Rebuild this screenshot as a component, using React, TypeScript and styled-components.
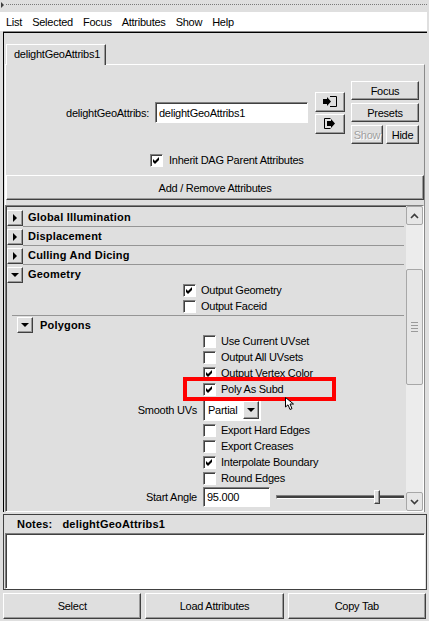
import React from "react";
import styled, { createGlobalStyle, css } from "styled-components";

const BG = "#dfdfdf";

const GlobalStyle = createGlobalStyle`
  * { box-sizing: border-box; }
  body { margin: 0; background: ${BG}; }
`;

// classic raised / sunken bevels
const raised = css`
  background: ${BG};
  border: 1px solid;
  border-color: #ffffff #404040 #404040 #ffffff;
  box-shadow: inset -1px -1px 0 #9a9a9a;
`;

const sunken = css`
  background: #ffffff;
  border: 1px solid;
  border-color: #808080 #ffffff #ffffff #808080;
  box-shadow: inset 1px 1px 0 #404040;
`;

const Page = styled.div`
  position: relative;
  width: 429px;
  height: 621px;
  overflow: hidden;
  display: flex;
  flex-direction: column;
  background: ${BG};
  font-family: "Liberation Sans", Arial, sans-serif;
  font-size: 11px;
  letter-spacing: -0.25px;
  color: #000;
`;

const Grip = styled.div`
  flex: none;
  height: 12px;
  display: flex;
  align-items: center;
  gap: 2px;
  padding: 0 2px 3px 1px;
`;

const GripArrow = styled.span`
  width: 0;
  height: 0;
  border-top: 3px solid transparent;
  border-bottom: 3px solid transparent;
  border-left: 3px solid #404040;
`;

const GripDots = styled.span`
  flex: 1;
  border-top: 1px dotted #7a7a7a;
`;

const MenuBar = styled.div`
  flex: none;
  height: 19px;
  margin-right: 2px;
  background: #ffffff;
  display: flex;
  align-items: center;
  gap: 10px;
  padding-left: 6px;
`;

const MainFrame = styled.div`
  flex: none;
  margin: 1px 2px 0 3px;
  border-top: 1px solid #000;
  border-left: 1px solid #000;
  box-shadow: 0 -1px 0 #8a8a8a;
  padding: 11px 0 0 1px;
`;

const TabStrip = styled.div`
  display: flex;
  height: 20px;
`;

const Tab = styled.div`
  position: relative;
  z-index: 1;
  margin-left: 1px;
  width: 100px;
  height: 21px;
  padding-left: 7px;
  line-height: 19px;
  background: ${BG};
  border-top: 1px solid #fff;
  border-left: 1px solid #fff;
  border-right: 1px solid #404040;
  box-shadow: inset -1px 0 0 #9a9a9a;
`;

const TabPanel = styled.div`
  margin-right: 2px;
  border-top: 1px solid #fff;
  border-left: 1px solid #fff;
  border-right: 1px solid #8a8a8a;
`;

const EditorRow = styled.div`
  display: flex;
  align-items: center;
  padding-top: 16px;
`;

const NameLabel = styled.div`
  width: 143px;
  text-align: right;
  margin-right: 6px;
`;

const TextField = styled.div<{ $w: number; $h: number }>`
  ${sunken};
  width: ${(p) => p.$w}px;
  height: ${(p) => p.$h}px;
  flex: none;
  display: flex;
  align-items: center;
  padding-left: 3px;
  white-space: nowrap;
  overflow: hidden;
`;

const IconCol = styled.div`
  display: flex;
  flex-direction: column;
  gap: 2px;
  width: 30px;
  margin-left: 7px;
`;

const IconBtn = styled.div`
  ${raised};
  height: 20px;
  display: flex;
  align-items: center;
  justify-content: center;
`;

const ButtonCol = styled.div`
  display: flex;
  flex-direction: column;
  gap: 3px;
  width: 68px;
  margin-left: 6px;
`;

const ButtonPair = styled.div`
  display: flex;
  gap: 3px;
`;

const PushButton = styled.button<{ $h?: number; $w?: number; $grow?: boolean; $disabled?: boolean }>`
  ${raised};
  appearance: none;
  margin: 0;
  padding: 0;
  font: inherit;
  letter-spacing: inherit;
  flex: none;
  height: ${(p) => p.$h ?? 19}px;
  width: ${(p) => (p.$w ? `${p.$w}px` : "auto")};
  ${(p) => (p.$grow ? "flex: 1 1 0;" : "")}
  display: flex;
  align-items: center;
  justify-content: center;
  color: ${(p) => (p.$disabled ? "#a0a0a0" : "#000")};
  text-shadow: ${(p) => (p.$disabled ? "1px 1px 0 #fff" : "none")};
`;

const WideButton = styled(PushButton)`
  width: 100%;
`;

const InheritRow = styled.div`
  display: flex;
  align-items: center;
  gap: 6px;
  height: 14px;
  margin: 9px 0 8px;
  padding-left: 144px;
`;

const Box = styled.div`
  ${sunken};
  width: 13px;
  height: 13px;
  flex: none;
  display: flex;
  align-items: center;
  justify-content: center;
`;

const ScrollArea = styled.div`
  display: flex;
  height: 307px;
  margin: 5px 0 0 -1px;
  border: 1px solid;
  border-color: #808080 #ffffff #ffffff #808080;
  box-shadow: inset 1px 1px 0 #404040;
`;

const Content = styled.div`
  flex: 1;
  overflow: hidden;
  display: flex;
  flex-direction: column;
  padding: 2px 0 0 1px;
`;

const FrameHeader = styled.div<{ $indent?: number; $h?: number }>`
  flex: none;
  display: flex;
  align-items: center;
  height: ${(p) => p.$h ?? 19}px;
  padding-left: ${(p) => p.$indent ?? 0}px;
`;

const CollapseBtn = styled.div`
  ${raised};
  width: 16px;
  height: 16px;
  flex: none;
  display: flex;
  align-items: center;
  justify-content: center;
`;

const Arrow = styled.span<{ $open?: boolean }>`
  width: 0;
  height: 0;
  ${(p) =>
    p.$open
      ? css`
          border-left: 4px solid transparent;
          border-right: 4px solid transparent;
          border-top: 4px solid #000;
        `
      : css`
          border-top: 4px solid transparent;
          border-bottom: 4px solid transparent;
          border-left: 4px solid #000;
        `}
`;

const FrameTitle = styled.div<{ $line?: boolean; $pad?: number }>`
  flex: 1;
  align-self: stretch;
  display: flex;
  align-items: center;
  margin-right: 2px;
  padding-left: ${(p) => p.$pad ?? 5}px;
  font-weight: bold;
  letter-spacing: 0.2px;
  border-bottom: ${(p) => (p.$line ? "1px solid #959595" : "1px solid transparent")};
`;

const CheckRow = styled.div<{ $x: number; $top?: number }>`
  flex: none;
  display: flex;
  align-items: center;
  gap: 5px;
  height: 16px;
  padding-left: ${(p) => p.$x}px;
  margin-top: ${(p) => p.$top ?? 0}px;
  white-space: nowrap;
`;

const Divider = styled.div`
  flex: none;
  margin: 1px 2px 0 5px;
  border-top: 1px solid #959595;
`;

const LabeledRow = styled.div<{ $h: number }>`
  flex: none;
  display: grid;
  grid-template-columns: 190px auto 1fr;
  column-gap: 6px;
  align-items: center;
  height: ${(p) => p.$h}px;
`;

const RowLabel = styled.div`
  text-align: right;
`;

const Dropdown = styled.div`
  ${sunken};
  width: 58px;
  height: 22px;
  display: flex;
  align-items: center;
  padding: 1px 1px 1px 4px;
`;

const DropText = styled.span`
  flex: 1;
`;

const DropBtn = styled.div`
  ${raised};
  width: 16px;
  height: 18px;
  display: flex;
  align-items: center;
  justify-content: center;
`;

const DropArrow = styled.span`
  width: 0;
  height: 0;
  border-left: 4px solid transparent;
  border-right: 4px solid transparent;
  border-top: 4px solid #000;
`;

const Slider = styled.div`
  position: relative;
  height: 20px;
  margin-right: 2px;
  display: flex;
  align-items: center;
`;

const SliderTrack = styled.div`
  flex: 1;
  height: 4px;
  margin-top: 1px;
  border-top: 1px solid #808080;
  border-bottom: 1px solid #ffffff;
  border-left: 1px solid #808080;
  background: #404040;
`;

const SliderThumb = styled.div`
  ${raised};
  position: absolute;
  left: 98px;
  top: 3px;
  width: 6px;
  height: 14px;
`;

const ScrollBar = styled.div`
  width: 17px;
  flex: none;
  display: flex;
  flex-direction: column;
  background: #ececec;
`;

const ScrollBtn = styled.div`
  height: 19px;
  flex: none;
  border: 1px solid #a7a7a7;
  border-radius: 2px;
  background: #e6e6e6;
  display: flex;
  align-items: center;
  justify-content: center;
`;

const ScrollTrack = styled.div`
  flex: 1;
  padding-top: 44px;
`;

const ScrollThumb = styled.div`
  height: 116px;
  border: 1px solid #a7a7a7;
  border-radius: 2px;
  background: #e6e6e6;
  display: flex;
  flex-direction: column;
  align-items: center;
  justify-content: center;
  gap: 2px;
`;

const GripLine = styled.span`
  width: 7px;
  border-top: 1px solid #9a9a9a;
`;

const NotesFrame = styled.div`
  flex: none;
  margin: 2px 2px 0 3px;
  border: 1px solid #404040;
`;

const NotesHeader = styled.div`
  height: 18px;
  display: flex;
  align-items: center;
  gap: 10px;
  padding-left: 13px;
  font-weight: bold;
  letter-spacing: 0.2px;
`;

const NotesText = styled.div`
  ${sunken};
  height: 56px;
  margin: 0 1px;
`;

const ButtonBar = styled.div`
  flex: none;
  display: grid;
  grid-template-columns: repeat(3, 1fr);
  gap: 4px;
  height: 26px;
  margin-top: 3px;
  padding: 0 3px;
`;

const Highlight = styled.div`
  position: absolute;
  left: 183px;
  top: 377px;
  width: 153px;
  height: 24px;
  border: 4px solid #ff0000;
  pointer-events: none;
`;

const Cursor = styled.svg`
  position: absolute;
  left: 285px;
  top: 397px;
`;

const CheckMark = () => (
  <svg width="7" height="7" viewBox="0 0 7 7">
    <path d="M0 2 L2 4 L6 0 V3 L2 7 L0 5 Z" fill="#000" />
  </svg>
);

const CheckBox: React.FC<{ checked?: boolean }> = ({ checked }) => (
  <Box>{checked && <CheckMark />}</Box>
);

const InsertIcon = () => (
  <svg width="15" height="11" viewBox="0 0 15 11">
    <path d="M7 0.5 H13.5 V10.5 H7" stroke="#000" fill="none" />
    <polygon points="0,3 4,3 4,1 8,5.5 4,10 4,8 0,8" fill="#000" />
  </svg>
);

const ExportIcon = () => (
  <svg width="15" height="11" viewBox="0 0 15 11">
    <path d="M7.5 0.5 H1.5 V10.5 H7.5" stroke="#000" fill="none" />
    <polygon points="4,3 8,3 8,1 12,5.5 8,10 8,8 4,8" fill="#000" />
  </svg>
);

const Chevron: React.FC<{ down?: boolean }> = ({ down }) => (
  <svg width="9" height="6" viewBox="0 0 9 6">
    <polyline
      points={down ? "1,1 4.5,4.5 8,1" : "1,5 4.5,1.5 8,5"}
      stroke="#3c3c3c"
      strokeWidth="1.6"
      fill="none"
    />
  </svg>
);

const menus = ["List", "Selected", "Focus", "Attributes", "Show", "Help"];
const collapsed = ["Global Illumination", "Displacement", "Culling And Dicing"];

const polyTop = [
  { label: "Use Current UVset", checked: false },
  { label: "Output All UVsets", checked: false },
  { label: "Output Vertex Color", checked: true },
  { label: "Poly As Subd", checked: true },
];

const polyBottom = [
  { label: "Export Hard Edges", checked: false },
  { label: "Export Creases", checked: false },
  { label: "Interpolate Boundary", checked: true },
  { label: "Round Edges", checked: false },
];

const App: React.FC = () => {
  return (
    <Page>
      <GlobalStyle />
      <Grip>
        <GripArrow />
        <GripDots />
      </Grip>
      <MenuBar>
        {menus.map((m) => (
          <span key={m}>{m}</span>
        ))}
      </MenuBar>

      <MainFrame>
        <TabStrip>
          <Tab>delightGeoAttribs1</Tab>
        </TabStrip>
        <TabPanel>
          <EditorRow>
            <NameLabel>delightGeoAttribs:</NameLabel>
            <TextField $w={153} $h={21}>delightGeoAttribs1</TextField>
            <IconCol>
              <IconBtn>
                <InsertIcon />
              </IconBtn>
              <IconBtn>
                <ExportIcon />
              </IconBtn>
            </IconCol>
            <ButtonCol>
              <PushButton>Focus</PushButton>
              <PushButton>Presets</PushButton>
              <ButtonPair>
                <PushButton $w={32} $disabled>
                  Show
                </PushButton>
                <PushButton $grow>Hide</PushButton>
              </ButtonPair>
            </ButtonCol>
          </EditorRow>

          <InheritRow>
            <CheckBox checked />
            <span>Inherit DAG Parent Attributes</span>
          </InheritRow>

          <WideButton $h={25}>Add / Remove Attributes</WideButton>

          <ScrollArea>
            <Content>
              {collapsed.map((t) => (
                <FrameHeader key={t}>
                  <CollapseBtn>
                    <Arrow />
                  </CollapseBtn>
                  <FrameTitle $line>{t}</FrameTitle>
                </FrameHeader>
              ))}
              <FrameHeader>
                <CollapseBtn>
                  <Arrow $open />
                </CollapseBtn>
                <FrameTitle>Geometry</FrameTitle>
              </FrameHeader>

              <CheckRow $x={176} $top={-2}>
                <CheckBox checked />
                Output Geometry
              </CheckRow>
              <CheckRow $x={176}>
                <CheckBox />
                Output Faceid
              </CheckRow>

              <Divider />

              <FrameHeader $indent={10} $h={18}>
                <CollapseBtn>
                  <Arrow $open />
                </CollapseBtn>
                <FrameTitle $pad={7}>Polygons</FrameTitle>
              </FrameHeader>

              {polyTop.map((r, i) => (
                <CheckRow key={r.label} $x={196} $top={i === 0 ? -1 : 0}>
                  <CheckBox checked={r.checked} />
                  {r.label}
                </CheckRow>
              ))}

              <LabeledRow $h={25}>
                <RowLabel>Smooth UVs</RowLabel>
                <Dropdown>
                  <DropText>Partial</DropText>
                  <DropBtn>
                    <DropArrow />
                  </DropBtn>
                </Dropdown>
              </LabeledRow>

              {polyBottom.map((r) => (
                <CheckRow key={r.label} $x={196}>
                  <CheckBox checked={r.checked} />
                  {r.label}
                </CheckRow>
              ))}

              <LabeledRow $h={21}>
                <RowLabel>Start Angle</RowLabel>
                <TextField $w={67} $h={20}>
                  95.000
                </TextField>
                <Slider>
                  <SliderTrack />
                  <SliderThumb />
                </Slider>
              </LabeledRow>
            </Content>

            <ScrollBar>
              <ScrollBtn>
                <Chevron />
              </ScrollBtn>
              <ScrollTrack>
                <ScrollThumb>
                  <GripLine />
                  <GripLine />
                  <GripLine />
                  <GripLine />
                </ScrollThumb>
              </ScrollTrack>
              <ScrollBtn>
                <Chevron down />
              </ScrollBtn>
            </ScrollBar>
          </ScrollArea>
        </TabPanel>
      </MainFrame>

      <NotesFrame>
        <NotesHeader>
          <span>Notes:</span>
          <span>delightGeoAttribs1</span>
        </NotesHeader>
        <NotesText />
      </NotesFrame>

      <ButtonBar>
        <PushButton $h={26}>Select</PushButton>
        <PushButton $h={26}>Load Attributes</PushButton>
        <PushButton $h={26}>Copy Tab</PushButton>
      </ButtonBar>

      <Highlight />
      <Cursor width="12" height="14" viewBox="0 0 12 14">
        <path
          d="M0.5 0.5 L0.5 10 L3 7.8 L5 12.5 L7 11.6 L5 7 L8.5 7 Z"
          fill="#fff"
          stroke="#000"
          strokeWidth="1"
        />
      </Cursor>
    </Page>
  );
};

export default App;
